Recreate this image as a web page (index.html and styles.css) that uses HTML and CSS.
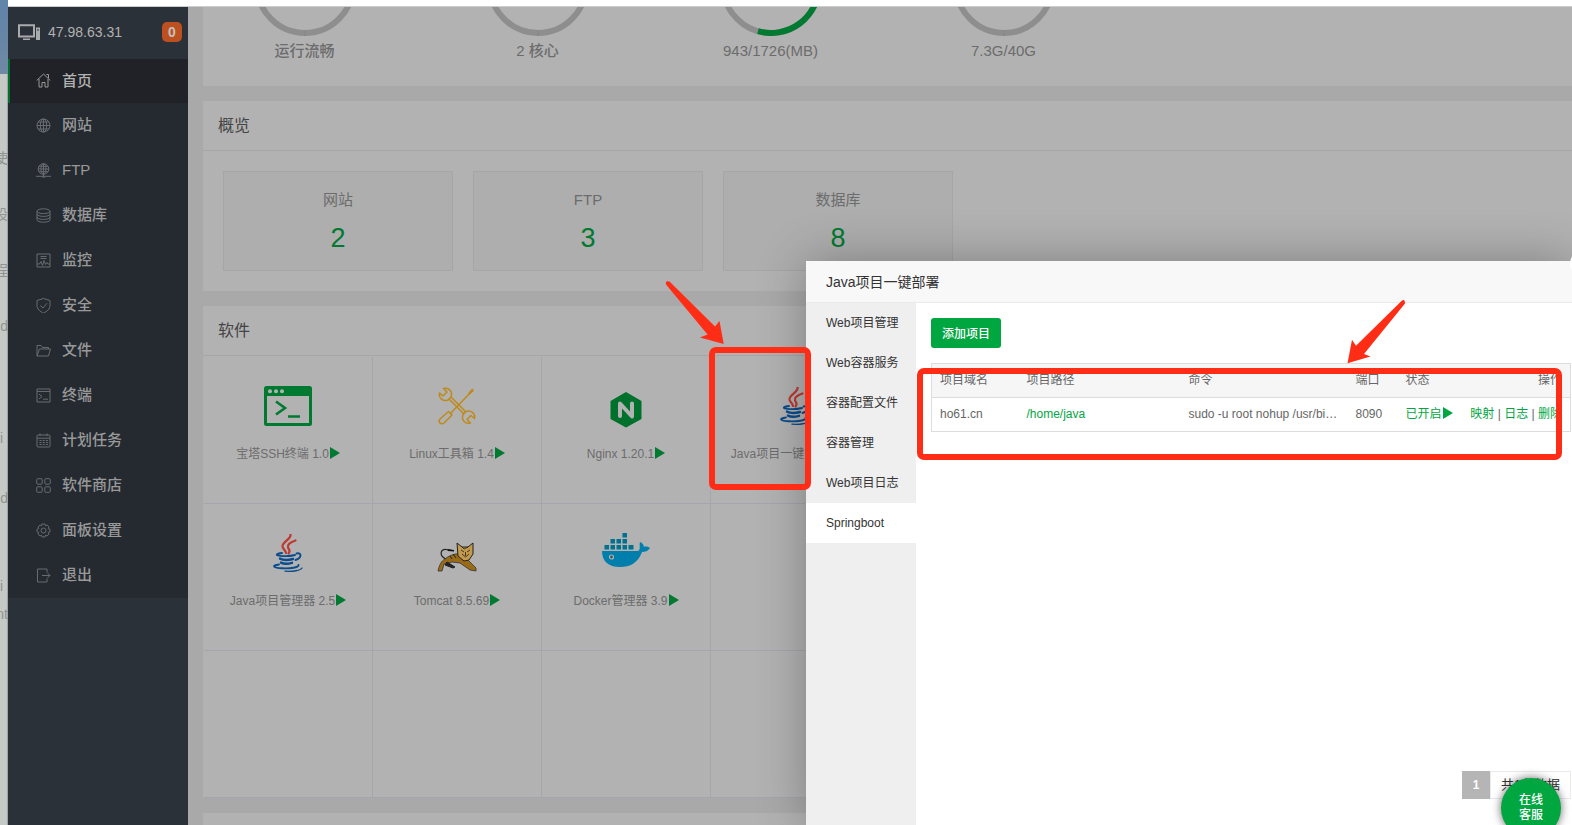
FILE: index.html
```html
<!DOCTYPE html>
<html lang="zh-CN">
<head>
<meta charset="utf-8">
<title>Java项目一键部署</title>
<link rel="stylesheet" href="styles.css">
</head>
<body>
<svg class="defs" aria-hidden="true">
  <symbol id="java" viewBox="0 0 30 38">
    <g fill="none" stroke-linecap="round">
      <path d="M17.500 .5C18.500 5 9 8 9.500 12.500C9.800 15 12.500 16 13 19" stroke="#bd3a33" stroke-width="2.200"/>
      <path d="M22.500 6.500C18 8 14 10.500 15 13.500C16 16 18 16.500 15.500 19.500" stroke="#bd3a33" stroke-width="2.200"/>
      <path d="M9 19C4 19.500 2 21 6 21.600C11 22.400 18 22 22 21" stroke="#0b4c8c" stroke-width="1.900"/>
      <path d="M23.500 19.500C29 18 29 24 22.500 26" stroke="#0b4c8c" stroke-width="1.900"/>
      <path d="M7 24.600C10 26.200 16 26 20 25M8 28.600C11 30.200 15 30 19 28.800" stroke="#0b4c8c" stroke-width="2.400"/>
      <path d="M6 30.500C-2 31.500 .5 34 9 34.300C17 34.700 26 33.500 25.500 31" stroke="#0b4c8c" stroke-width="1.900"/>
      <path d="M12 37.200C20 37.800 27.500 36.500 29 34" stroke="#0b4c8c" stroke-width="1.300"/>
    </g>
  </symbol>
</svg>

<div class="desktop">
  <div class="behind" aria-hidden="true">
    <div class="behind-top"></div>
    <div class="behind-rows">
      <span>。</span><span>使</span><span>设</span><span>程</span><span>d</span><span></span><span class="left">i</span><span class="tall">d</span><span class="blank"></span><span class="short left">i</span><span class="short">nt</span>
    </div>
  </div>

  <div class="window">
    <div class="topbar"></div>
    <div class="panel">
      <aside class="sidebar">
        <div class="host">
          <svg class="host-icon" width="23" height="17" viewBox="0 0 23 17"><path d="M1 1.200H16V12.500H1Z" fill="none" stroke="#a9abad" stroke-width="2"/><path d="M5 14.500H12V16H5ZM18 3.500H22V16H18Z" fill="#a9abad"/><path d="M19 6H21" stroke="#2a3138"/></svg>
          <span class="host-ip">47.98.63.31</span>
          <span class="badge">0</span>
        </div>
        <nav class="menu">
          <a class="active" href="#"><svg viewBox="0 0 15 15"><path d="M.7 7.500L7.500 1L14.300 7.500M3 6V14H6V9.500H9V14H12V6M10.500 1.500H12.500V5"/></svg>首页</a>
          <a href="#"><svg viewBox="0 0 15 15"><circle cx="7.500" cy="7.500" r="6.500"/><ellipse cx="7.500" cy="7.500" rx="3.200" ry="6.500"/><path d="M7.500 1V14M1 7.500H14M2 4H13M2 11H13"/></svg>网站</a>
          <a href="#"><svg viewBox="0 0 15 15"><circle cx="7.500" cy="6" r="5.300"/><ellipse cx="7.500" cy="6" rx="2.500" ry="5.300"/><path d="M7.500 1V13M2 6H13M3 3.300H12M3 8.700H12M0 13.300H15M6 14H9"/></svg>FTP</a>
          <a href="#"><svg viewBox="0 0 15 15"><ellipse cx="7.500" cy="3.200" rx="6.500" ry="2.400"/><path d="M1 3.200V11.800C1 15 14 15 14 11.800V3.200M1 6C1 9.200 14 9.200 14 6M1 9C1 12.200 14 12.200 14 9"/></svg>数据库</a>
          <a href="#"><svg viewBox="0 0 15 15"><path d="M1 1H14V14H1ZM4.500 3.500H10.500M4.500 5.500H10.500M1 11H3.500L5 8.500L6.500 12.500L8 7.500L9.500 11.500L11 9.500L12 11H14"/></svg>监控</a>
          <a href="#"><svg viewBox="0 0 15 15"><path d="M7.500 .5L14 2.500V7.500C14 11 11 13.500 7.500 15C4 13.500 1 11 1 7.500V2.500ZM4.200 7.500L7 10L11 5.200"/></svg>安全</a>
          <a href="#"><svg viewBox="0 0 15 15"><path d="M1 13V2.500H5L6.500 4.500H12.500V6M1 13L3.500 6H14.500L12.500 13Z"/></svg>文件</a>
          <a href="#"><svg viewBox="0 0 15 15"><path d="M1 1H14V14H1ZM1 3.500H14M3 6L6 8.500L3 11M7 11.200H12"/></svg>终端</a>
          <a href="#"><svg viewBox="0 0 15 15"><rect x="1" y="2" width="13" height="12" rx="1"/><path d="M1 5.200H14M4 .5V3M11 .5V3"/><path stroke-dasharray="2 1.200" d="M3.500 7.500H12M3.500 9.500H12M3.500 11.500H12"/></svg>计划任务</a>
          <a href="#"><svg viewBox="0 0 15 15"><rect x=".7" y=".7" width="5.500" height="5.500" rx="1"/><rect x="8.800" y=".7" width="5.500" height="5.500" rx="1"/><rect x=".7" y="8.800" width="5.500" height="5.500" rx="1"/><rect x="8.800" y="8.800" width="5.500" height="5.500" rx="1"/></svg>软件商店</a>
          <a href="#"><svg viewBox="0 0 15 15"><path d="M6 1H9L9.500 2.800L11.200 2L13 4L12.200 5.700L14 6.200V8.800L12.200 9.300L13 11L11 13L9.400 12.200L9 14H6L5.500 12.200L4 13L2 11L2.800 9.300L1 8.800V6.200L2.800 5.700L2 4L4 2L5.500 2.800Z"/><circle cx="7.500" cy="7.500" r="2.500"/></svg>面板设置</a>
          <a href="#"><svg viewBox="0 0 15 15"><path d="M11 4.500V1H1.500V14H11V10.500M6 7.500H14M11.500 5L14 7.500L11.500 10"/></svg>退出</a>
        </nav>
      </aside>

      <main class="main">
        <section class="card status">
          <div class="gauge"><svg viewBox="0 0 102 30"><circle cx="51" cy="-22" r="48"/><path class="tick" d="M51 23V29"/></svg>运行流畅</div>
          <div class="gauge"><svg viewBox="0 0 102 30"><circle cx="51" cy="-22" r="48"/><path class="tick" d="M51 23V29"/></svg>2 核心</div>
          <div class="gauge"><svg viewBox="0 0 102 30"><circle cx="51" cy="-22" r="48"/><path class="used" d="M38 24.200A48 48 0 0 0 99 -22"/></svg>943/1726(MB)</div>
          <div class="gauge"><svg viewBox="0 0 102 30"><circle cx="51" cy="-22" r="48"/><path class="tick" d="M51 23V29"/></svg>7.3G/40G</div>
        </section>

        <section class="card">
          <h2>概览</h2>
          <div class="stats">
            <div class="stat"><span>网站</span><a href="#">2</a></div>
            <div class="stat"><span>FTP</span><a href="#">3</a></div>
            <div class="stat"><span>数据库</span><a href="#">8</a></div>
          </div>
        </section>

        <section class="card">
          <h2>软件</h2>
          <div class="apps">
            <div class="app">
              <svg viewBox="0 0 48 48"><rect x="1.500" y="5.500" width="45" height="37" rx="1" fill="none" stroke="#007a31" stroke-width="3"/><path d="M1 5H47V14H1Z" fill="#007a31"/><g fill="#b2b2b2"><circle cx="6" cy="9.200" r="2"/><circle cx="12" cy="9.200" r="2"/><circle cx="18" cy="9.200" r="2"/></g><path d="M12 19.500L21 26L12 32.500M24 34.500H36" fill="none" stroke="#007a31" stroke-width="2.600"/></svg>
              <span>宝塔SSH终端 1.0<i class="play"></i></span>
            </div>
            <div class="app">
              <svg viewBox="0 0 48 48"><g fill="none" stroke="#bd8a1c" stroke-width="1.500" stroke-linejoin="round"><path d="M16 17L31 32M18 15L33 30"/><path d="M10.500 6.500L14 10L10 14L6.500 11C5.500 16 10 20 15 18L18 15C20 10 16 5 10.500 6.500Z"/><path d="M37.500 41L34 37.500L38 33.500L41.500 36.500C42.500 31.500 38 27.500 33 29.500L30 32.500C28 37.500 32 42.500 37.500 41Z"/><path d="M17 32L38 10M36 11L40 7"/><path d="M15.500 29.500L19 33L11 41C8 43 4.500 40 7 37Z"/></g><path d="M35 12L39 7L41 9L36 13Z" fill="#bd8a1c"/></svg>
              <span>Linux工具箱 1.4<i class="play"></i></span>
            </div>
            <div class="app">
              <svg viewBox="0 0 48 48"><path d="M24 10L39.500 19V37L24 45.500L8.500 37V19Z" fill="#00702d"/><path d="M18 34V21.500L30 34.500V21.500" fill="none" stroke="#b2b2b2" stroke-width="4" stroke-linecap="round" stroke-linejoin="round"/></svg>
              <span>Nginx 1.20.1<i class="play"></i></span>
            </div>
            <div class="app">
              <svg viewBox="0 0 48 48"><use href="#java" x="9" y="5" width="30" height="38"/></svg>
              <span>Java项目一键部署 3.5<i class="play"></i></span>
            </div>
            <div class="app">
              <svg viewBox="0 0 48 48"><use href="#java" x="9" y="5" width="30" height="38"/></svg>
              <span>Java项目管理器 2.5<i class="play"></i></span>
            </div>
            <div class="app">
              <svg viewBox="0 0 48 48"><path d="M13 30C6 27 7 20 13 20.500L19 21.500" fill="none" stroke="#222" stroke-width="1.200"/><path d="M14 20L21 21V22.500L15 22Z" fill="#111"/><path d="M12 30C18 25 27 23 31 27L43 39V42L37 41L27 34L19 33L11 35L9 42H5C6 37 8 32 12 30Z" fill="#9a6b16" stroke="#333" stroke-width=".8"/><path d="M14 33L22 38L20 39L12 36ZM20 25L23 29M17 27L19 30" fill="#222" stroke="#222"/><path d="M24 14L29 18H35L40 14L40 25L36 31L31 32L25 27Z" fill="#c49a4c" stroke="#222" stroke-width="1"/><path d="M28 21L31 23M37 21L34 23M29 25L32.500 28L36 25M32.500 23V27M29 18L31 20L35 18" fill="none" stroke="#222" stroke-width=".8"/></svg>
              <span>Tomcat 8.5.69<i class="play"></i></span>
            </div>
            <div class="app">
              <svg viewBox="0 0 48 48"><path d="M0 22H36C39 21 37 16 38 13C41 14 42 17 42 18C44 17 47 18 48 19C46 22 43 23 40 23C36 34 28 38 18 38C6 38 0 32 0 22Z" fill="#007fad"/><path d="M2.500 16H7V20.500H2.500ZM8.500 16H13V20.500H8.500ZM14.500 16H19V20.500H14.500ZM20.500 16H25V20.500H20.500ZM26.500 16H31.500V20.500H26.500ZM8.500 10H13V14.500H8.500ZM14.500 10H19V14.500H14.500ZM20.500 10H25V14.500H20.500ZM20.500 4H25V8.500H20.500Z" fill="#00718f"/><circle cx="9.500" cy="28" r="2" fill="#356" stroke="#b2b2b2" stroke-width="1.200"/></svg>
              <span>Docker管理器 3.9<i class="play"></i></span>
            </div>
            <div class="app"></div>
            <div class="app"></div><div class="app"></div><div class="app"></div><div class="app"></div>
          </div>
        </section>
        <section class="card rest"></section>
      </main>
    </div>
  </div>

  <div class="dialog" role="dialog" aria-labelledby="dialog-title">
    <h3 id="dialog-title">Java项目一键部署</h3>
    <button class="close" aria-label="关闭"></button>
    <div class="dialog-body">
      <nav class="tabs">
        <a href="#">Web项目管理</a>
        <a href="#">Web容器服务</a>
        <a href="#">容器配置文件</a>
        <a href="#">容器管理</a>
        <a href="#">Web项目日志</a>
        <a class="on" href="#">Springboot</a>
      </nav>
      <div class="pane">
        <button class="add">添加项目</button>
        <table>
          <colgroup><col class="c-domain"><col class="c-path"><col><col class="c-port"><col class="c-state"><col class="c-ops"></colgroup>
          <thead><tr><th>项目域名</th><th>项目路径</th><th>命令</th><th>端口</th><th>状态</th><th class="ops">操作</th></tr></thead>
          <tbody><tr><td>ho61.cn</td><td><a href="#">/home/java</a></td><td>sudo -u root nohup /usr/bi…</td><td>8090</td><td><a href="#">已开启<i class="play"></i></a></td><td class="ops"><a href="#">映射</a> | <a href="#">日志</a> | <a href="#">删除</a></td></tr></tbody>
        </table>
        <div class="pager"><span class="current">1</span><span class="total">共1条数据</span></div>
      </div>
    </div>
  </div>

  <button class="service">在线<br>客服</button>

  <div class="mark mark-app"></div>
  <div class="mark mark-table"></div>
  <svg class="arrow arrow-app" width="60" height="65" viewBox="0 0 60 65"><path d="M1 4.500Q0 0 4.500 1.500L50 46.500L54.500 41L58.700 64L35 57.500L42.500 54.500Z"/></svg>
  <svg class="arrow arrow-table" width="60" height="65" viewBox="0 0 60 65"><path d="M56.500 2Q60 -1 60 4.500L19 55L25.500 57.500L2.500 64.300L7 40.700L11 46.700Z"/></svg>
</div>
</body>
</html>
```
FILE: styles.css
```css
* { box-sizing: border-box; }

body {
  margin: 0;
  font-family: "Liberation Sans", "Noto Sans CJK SC", sans-serif;
  font-size: 12px;
  line-height: 20px;
}

a { color: inherit; text-decoration: none; }
button { font-family: inherit; border: 0; padding: 0; }
h2, h3 { margin: 0; font-weight: 400; }
.defs { position: absolute; width: 0; height: 0; }

.desktop {
  position: relative;
  display: flex;
  height: 100vh;
  overflow: hidden;
}

/* Window lying behind the panel */
.behind {
  flex: none;
  width: 8px;
  overflow: hidden;
  background: linear-gradient(90deg, #c6cac7 80%, #8f9391);
}
.behind-top { height: 74px; background: linear-gradient(#5f84a8, #6e88a4); }
.behind-rows { display: flex; flex-direction: column; font-size: 14px; color: #8f9391; }
.behind-rows span { display: flex; align-items: center; justify-content: flex-end; height: 56px; }
.behind-rows .left { justify-content: flex-start; }
.behind-rows .tall { height: 64px; }
.behind-rows .blank { height: 42px; }
.behind-rows .short { height: 28px; }

.window { flex: 1; min-width: 0; display: flex; flex-direction: column; }
.topbar { flex: none; height: 7px; background: #fff; border-bottom: 1px solid #ccc; }
.panel { flex: 1; min-height: 0; display: flex; }

/* Sidebar */
.sidebar { flex: none; width: 180px; background: #2a3138; }
.host {
  display: flex;
  align-items: center;
  gap: 7px;
  height: 52px;
  padding: 0 6px 2px 10px;
  color: #b2b2b2;
  font-size: 14px;
}
.badge {
  margin-left: auto;
  width: 20px;
  border-radius: 5px;
  background: #bd5021;
  color: #c4c0be;
  font-weight: 700;
  text-align: center;
}
.menu { background: #242a30; color: #999; font-size: 15px; font-weight: 500; }
.menu a {
  display: flex;
  align-items: center;
  gap: 12px;
  height: 45px;
  padding: 0 0 1px 26px;
  border-left: 2px solid transparent;
}
.menu svg { width: 15px; height: 15px; margin-right: -1px; fill: none; stroke: #686c70; }
.menu .active { height: 44px; background: #202227; border-color: #00702d; color: #b2b2b2; }
.menu .active svg { stroke: #999; }

/* Main column */
.main {
  flex: 1;
  min-width: 0;
  display: flex;
  flex-direction: column;
  gap: 15px;
  padding-left: 15px;
  background: #a9a9a9;
  overflow: hidden;
}
.card { flex: none; background: #b2b2b2; color: #6c6c6c; }
.card h2 {
  height: 50px;
  padding-left: 15px;
  border-bottom: 1px solid #a6a6a6;
  color: #444;
  font-size: 16px;
  line-height: 50px;
}
.status { display: flex; height: 79px; }
.gauge {
  flex: none;
  display: flex;
  flex-direction: column;
  align-items: center;
  gap: 4px;
  width: 233px;
  font-size: 15px;
  font-weight: 500;
}
.gauge:first-child { margin-left: -15px; }
.gauge svg { width: 102px; height: 30px; fill: none; stroke: #8e8e8e; stroke-width: 6px; }
.gauge .tick { stroke: #838888; stroke-width: 1px; }
.gauge .used { stroke: #007a31; }

.stats { display: flex; gap: 20px; padding: 20px; }
.stat {
  display: flex;
  flex-direction: column;
  align-items: center;
  gap: 13px;
  width: 230px;
  height: 100px;
  padding-top: 18px;
  border: 1px solid #a6a6a6;
  background: #aeaeae;
  font-size: 15px;
}
.stat a { color: #007a31; font-size: 27px; line-height: 30px; }

.apps {
  display: grid;
  grid-template-columns: repeat(4, 169px);
  grid-auto-rows: 147px;
  padding: 1px 0 0 1px;
}
.app {
  display: flex;
  flex-direction: column;
  align-items: center;
  gap: 14px;
  padding-top: 25px;
  border-right: 1px solid #a5a5ad;
  border-bottom: 1px solid #a5a5ad;
  white-space: nowrap;
}
.app svg { width: 48px; height: 48px; }
.play {
  display: inline-block;
  margin-left: 1px;
  vertical-align: -1px;
  border-style: solid;
  border-width: 6px 0 6px 10px;
  border-color: transparent transparent transparent #007a31;
}
.rest { height: 40px; }

/* Dialog */
.dialog {
  position: absolute;
  top: 261px;
  right: 0;
  bottom: 0;
  left: 806px;
  display: flex;
  flex-direction: column;
  border-radius: 2px 0 0 0;
  background: #fff;
  box-shadow: 1px 1px 50px rgba(0, 0, 0, .3);
  color: #333;
}
.dialog h3 {
  height: 42px;
  padding-left: 20px;
  border-bottom: 1px solid #eaeaea;
  background: #f8f8f8;
  font-size: 14px;
  line-height: 42px;
}
.close {
  position: absolute;
  top: -13px;
  right: -30px;
  width: 32px;
  height: 32px;
  border-radius: 50%;
  background: #fff;
}
.dialog-body { flex: 1; display: flex; }
.tabs { flex: none; width: 110px; background: #efefef; }
.tabs a { display: block; height: 40px; padding-left: 20px; line-height: 40px; }
.tabs .on { background: #fff; }
.pane {
  flex: 1;
  min-width: 0;
  display: flex;
  flex-direction: column;
  gap: 15px;
  padding: 15px 1px 26px 15px;
}
.add {
  width: 70px;
  height: 30px;
  padding-bottom: 2px;
  border-radius: 3px;
  background: #00a63f;
  color: #fff;
  font-size: 12px;
  font-weight: 500;
}
table {
  width: 100%;
  table-layout: fixed;
  border-collapse: collapse;
  border: 1px solid #ddd;
  color: #666;
}
th, td { height: 34px; padding: 0 8px 2px; border-bottom: 1px solid #ddd; font-weight: 400; text-align: left; white-space: nowrap; }
th { background: #f6f6f6; }
.c-domain { width: 87px; }
.c-path { width: 162px; }
.c-port { width: 50px; }
.c-state { width: 60px; }
.c-ops { width: 113px; }
td a { color: #00a63f; }
td .play { border-left-color: #00a63f; }
th.ops, td.ops { text-align: right; }
.pager { display: flex; justify-content: flex-end; margin-top: auto; line-height: 28px; }
.current { width: 28px; background: #b5b5b5; color: #fff; font-weight: 700; text-align: center; }
.total { width: 81px; height: 28px; border: 1px solid #eaeaea; font-size: 13px; line-height: 26px; text-align: center; }

.service {
  position: absolute;
  right: 11px;
  bottom: -13px;
  width: 60px;
  height: 60px;
  border-radius: 50%;
  background: #00a63f;
  box-shadow: 0 0 10px rgba(0, 0, 0, .6);
  color: #fff;
  font-size: 12px;
  font-weight: 500;
  line-height: 15px;
}

/* Hand-drawn callouts */
.mark { position: absolute; border: 6px solid #ff2d16; border-radius: 7px; }
.mark-app { left: 709px; top: 347px; width: 102px; height: 143px; }
.mark-table { left: 917px; top: 368px; right: 10px; height: 92px; }
.arrow { position: absolute; fill: #ff2d16; }
.arrow-app { left: 665px; top: 280px; }
.arrow-table { left: 1345px; top: 299px; }
```
